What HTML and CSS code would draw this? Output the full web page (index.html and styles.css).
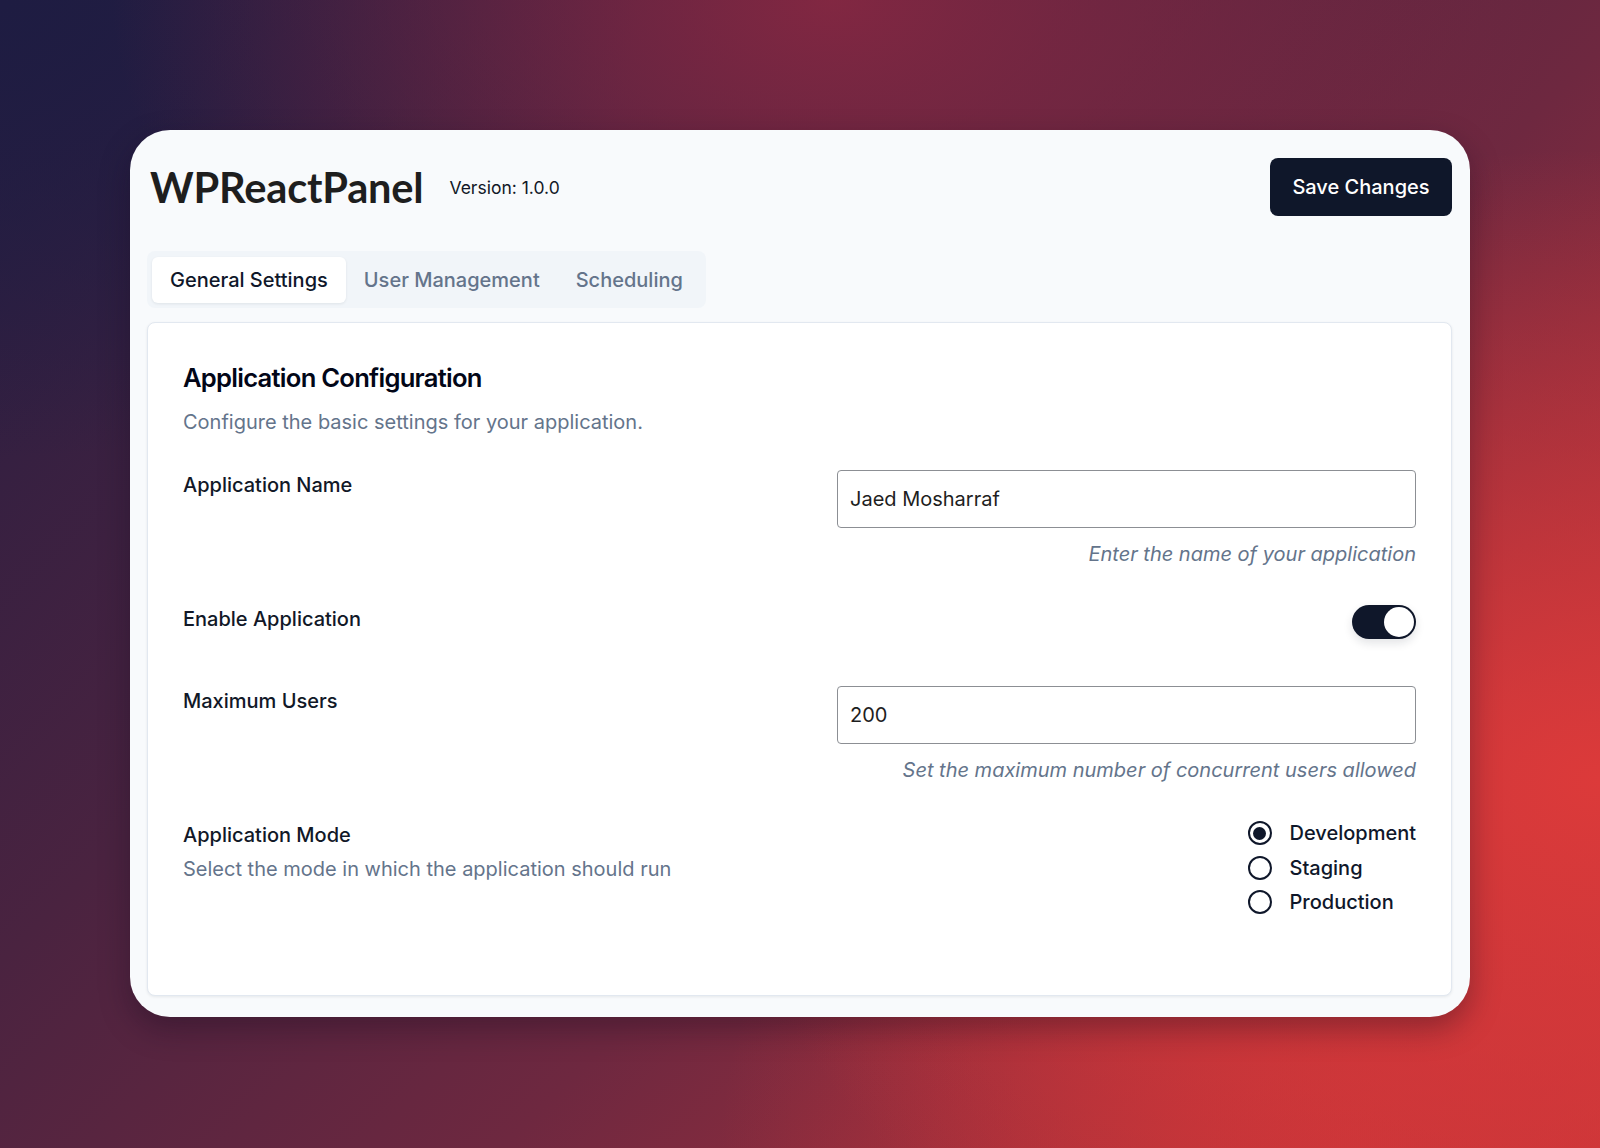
FILE: index.html
```html
<!DOCTYPE html>
<html lang="en">
<head>
<meta charset="utf-8">
<title>WPReactPanel</title>
<link rel="stylesheet" href="styles.css">
</head>
<body>
<div class="stage">
  <div class="card">
    <header class="header">
      <div class="brand">
        <h1 class="title">WPReactPanel</h1>
        <span class="version">Version: 1.0.0</span>
      </div>
      <button class="save-btn" type="button">Save Changes</button>
    </header>

    <nav class="tabs">
      <button class="tab tab-active" type="button">General Settings</button>
      <button class="tab" type="button">User Management</button>
      <button class="tab" type="button">Scheduling</button>
    </nav>

    <section class="panel">
      <h2 class="panel-title">Application Configuration</h2>
      <p class="panel-desc">Configure the basic settings for your application.</p>

      <div class="row">
        <div class="label-col">
          <label class="label">Application Name</label>
        </div>
        <div class="control-col">
          <input class="text-input" type="text" value="Jaed Mosharraf">
          <p class="hint">Enter the name of your application</p>
        </div>
      </div>

      <div class="row row-toggle">
        <div class="label-col">
          <label class="label">Enable Application</label>
        </div>
        <div class="control-col control-end">
          <span class="toggle"><span class="knob"></span></span>
        </div>
      </div>

      <div class="row">
        <div class="label-col">
          <label class="label">Maximum Users</label>
        </div>
        <div class="control-col">
          <input class="text-input" type="text" value="200">
          <p class="hint">Set the maximum number of concurrent users allowed</p>
        </div>
      </div>

      <div class="row">
        <div class="label-col">
          <label class="label">Application Mode</label>
          <p class="label-desc">Select the mode in which the application should run</p>
        </div>
        <div class="control-col control-end">
          <div class="radios">
            <div class="radio-item"><span class="radio radio-on"></span><span class="radio-label">Development</span></div>
            <div class="radio-item"><span class="radio"></span><span class="radio-label">Staging</span></div>
            <div class="radio-item"><span class="radio"></span><span class="radio-label">Production</span></div>
          </div>
        </div>
      </div>
    </section>
  </div>
</div>
</body>
</html>
```

FILE: styles.css
```css
* { box-sizing: border-box; }

html, body {
  margin: 0;
  padding: 0;
  width: 1600px;
  height: 1148px;
  overflow: hidden;
}

body {
  font-family: Inter, "Noto Sans", "Liberation Sans", sans-serif;
  color: #0f172a;
  background:
    radial-gradient(ellipse 45% 40% at 52% 0%, rgba(140, 40, 66, 0.85) 0%, rgba(140, 40, 66, 0) 100%),
    radial-gradient(ellipse 55% 55% at 100% 68%, rgba(220, 58, 58, 1) 0%, rgba(220, 58, 58, 0) 100%),
    radial-gradient(ellipse 40% 45% at 85% 100%, rgba(200, 52, 56, 0.9) 0%, rgba(200, 52, 56, 0) 100%),
    radial-gradient(ellipse 40% 40% at 0% 0%, rgba(30, 28, 66, 1) 0%, rgba(30, 28, 66, 0) 100%),
    linear-gradient(135deg, #231d42 0%, #4a2340 35%, #6e2840 60%, #a5303b 85%, #c53538 100%);
}

.stage {
  padding-top: 130px;
  display: flex;
  justify-content: center;
}

.card {
  width: 1340px;
  height: 887px;
  background: #f8fafc;
  border-radius: 40px;
  padding: 28px 18px 21px 17px;
  box-shadow: 0 12px 30px rgba(20, 10, 30, 0.35);
  display: flex;
  flex-direction: column;
}

.header {
  display: flex;
  justify-content: space-between;
  align-items: center;
  height: 58px;
}

.brand {
  display: flex;
  align-items: center;
  gap: 26px;
  padding-left: 3px;
}

.title {
  margin: 0;
  font-family: Lato, "Noto Sans", sans-serif;
  font-weight: 700;
  font-size: 41.6px;
  line-height: 58px;
  color: #1e1e1e;
  letter-spacing: -0.2px;
}

.version {
  font-size: 17.5px;
  color: #111827;
  padding-top: 1px;
}

.save-btn {
  font-family: inherit;
  font-size: 20px;
  font-weight: 500;
  color: #ffffff;
  background: #0f172a;
  border: none;
  border-radius: 8px;
  width: 182px;
  height: 58px;
  padding: 0;
  cursor: pointer;
}

.tabs {
  margin-top: 35px;
  align-self: flex-start;
  display: flex;
  background: #f1f5f9;
  border-radius: 8px;
  padding: 6px 5px 5px 5px;
  height: 57px;
}

.tab {
  font-family: inherit;
  font-size: 20px;
  font-weight: 500;
  color: #64748b;
  background: transparent;
  border: none;
  border-radius: 6px;
  padding: 0 18px;
  height: 46px;
  cursor: pointer;
}

.tab-active {
  background: #ffffff;
  color: #0f172a;
  box-shadow: 0 1px 3px rgba(15, 23, 42, 0.08);
}

.panel {
  margin-top: 14px;
  flex: 1;
  background: #ffffff;
  border: 1px solid #e2e8f0;
  border-radius: 8px;
  box-shadow: 0 1px 3px rgba(15, 23, 42, 0.08);
  padding: 37px 35px 36px 35px;
}

.panel-title {
  margin: 0;
  font-size: 25.6px;
  line-height: 36px;
  font-weight: 600;
  letter-spacing: -0.75px;
  color: #020617;
}

.panel-desc {
  margin: 12px 0 0 0;
  font-size: 20px;
  line-height: 28px;
  color: #64748b;
}

.row {
  display: grid;
  grid-template-columns: 1fr 579px;
  column-gap: 40px;
  margin-top: 36px;
}

.panel-desc + .row { margin-top: 34px; }

.row-toggle { min-height: 46px; }

.label-col { display: flex; flex-direction: column; }

.label {
  font-size: 20px;
  line-height: 28px;
  font-weight: 500;
  color: #111827;
  padding-top: 1px;
}

.label-desc {
  margin: 6px 0 0 0;
  font-size: 20px;
  line-height: 28px;
  color: #64748b;
}

.control-col {
  display: flex;
  flex-direction: column;
}

.control-end { align-items: flex-end; }

.text-input {
  width: 100%;
  height: 58px;
  border: 1px solid #8c8f94;
  border-radius: 4px;
  padding: 0 12px;
  font-family: inherit;
  font-size: 20px;
  color: #1e1e1e;
  background: #ffffff;
  outline: none;
}

.hint {
  margin: 12px 0 0 0;
  font-size: 20px;
  line-height: 28px;
  font-style: italic;
  color: #64748b;
  text-align: right;
}

.toggle {
  margin-top: 1px;
  width: 64px;
  height: 34px;
  border-radius: 17px;
  background: #0f172a;
  display: flex;
  align-items: center;
  justify-content: flex-end;
  padding: 2px;
  box-shadow: 0 4px 10px rgba(15, 23, 42, 0.12);
}

.knob {
  width: 30px;
  height: 30px;
  border-radius: 50%;
  background: #ffffff;
}

.radios {
  display: flex;
  flex-direction: column;
  gap: 6.5px;
  margin-top: -1px;
}

.radio-item {
  display: flex;
  align-items: center;
  gap: 18px;
  height: 28px;
}

.radio {
  width: 24px;
  height: 24px;
  border-radius: 50%;
  border: 2px solid #0f172a;
  background: #ffffff;
  display: flex;
  align-items: center;
  justify-content: center;
}

.radio-on::after {
  content: "";
  width: 13px;
  height: 13px;
  border-radius: 50%;
  background: #0f172a;
}

.radio-label {
  font-size: 20px;
  line-height: 28px;
  font-weight: 500;
  color: #0f172a;
}
```
